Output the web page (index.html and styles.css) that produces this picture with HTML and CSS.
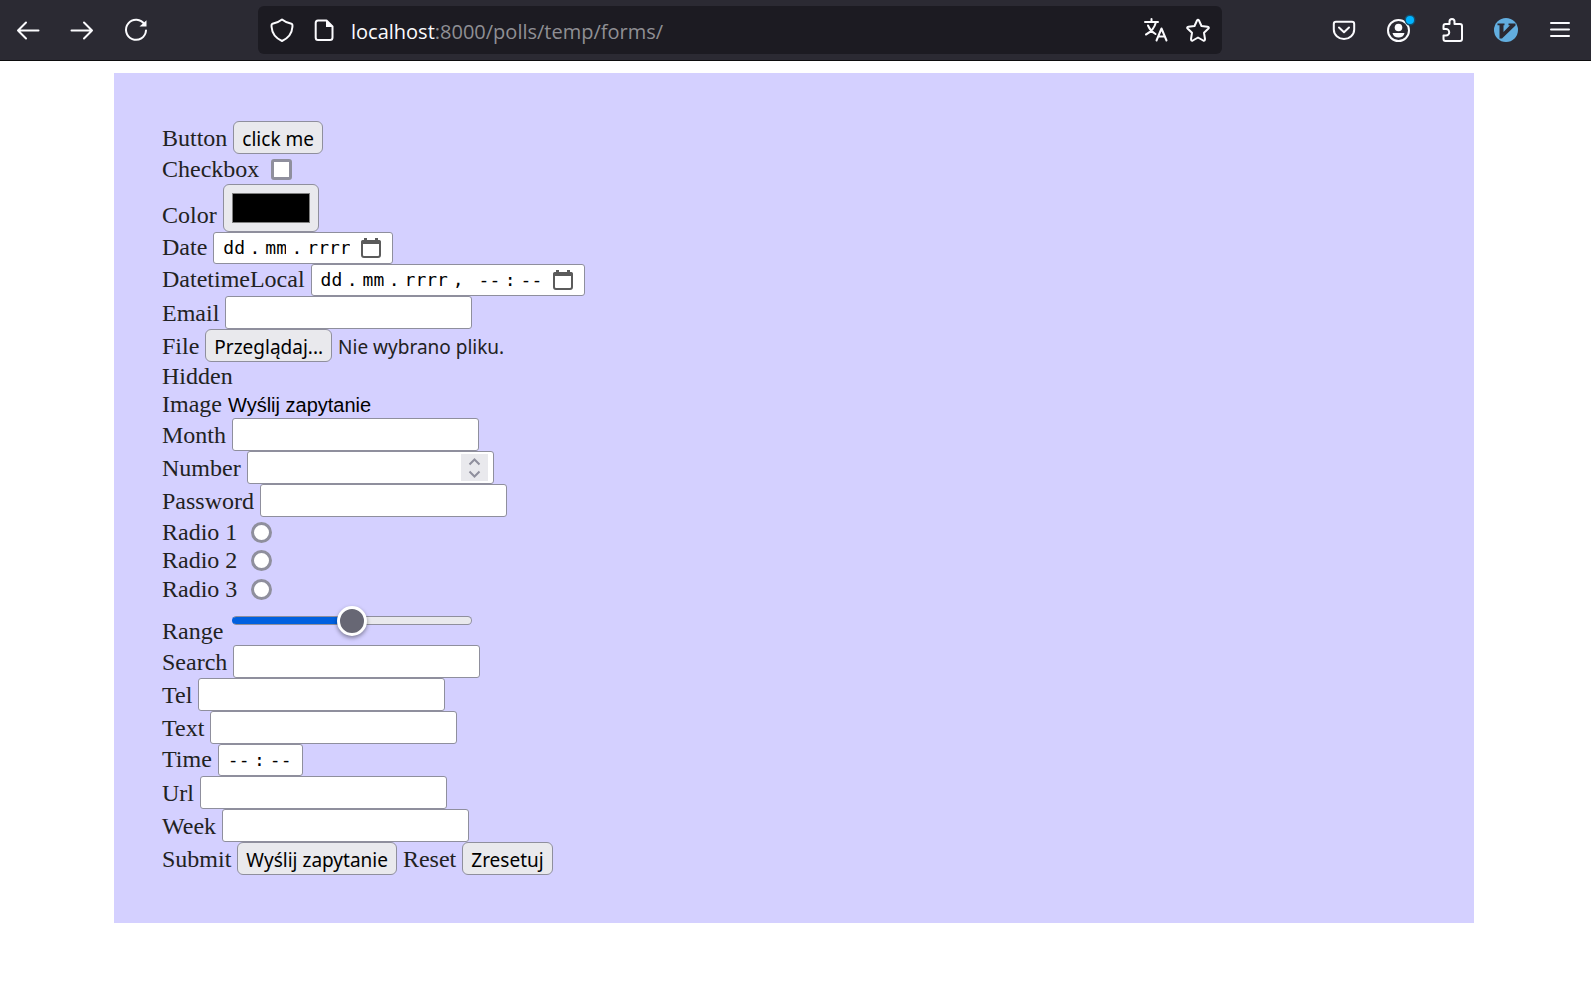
FILE: index.html
```html
<!DOCTYPE html>
<html lang="pl">
<head>
<meta charset="utf-8">
<title>Forms</title>
<link rel="stylesheet" href="styles.css">
</head>
<body>
<header class="toolbar">
  <nav class="tools">
    <button class="icon-btn" type="button"><svg class="icon" viewBox="0 0 24 24"><path d="M2 12.500H22.500M10 4.500L2 12.500L10 20.500"/></svg></button>
    <button class="icon-btn" type="button"><svg class="icon" viewBox="0 0 24 24"><path d="M1.500 12.500H22M14 4.500L22 12.500L14 20.500"/></svg></button>
    <button class="icon-btn" type="button"><svg class="icon" viewBox="0 0 24 24"><path d="M20.500 6.500A10 10 0 1 0 22 12.500"/><path class="solid" d="M22.500 2.200V8.500H15.500Z"/></svg></button>
  </nav>
  <div class="urlbar">
    <button class="icon-btn" type="button"><svg class="icon" viewBox="0 0 24 24"><path d="M12 1.500C14.500 3.600 18 5 21.500 5.800C22.800 6.100 22.500 7.500 22.400 9C22 15 18.500 20 12 23C5.500 20 2 15 1.600 9C1.500 7.500 1.200 6.100 2.500 5.800C6 5 9.500 3.600 12 1.500Z"/></svg></button>
    <button class="icon-btn" type="button"><svg class="icon" viewBox="0 0 24 24"><path d="M6 2.500H14.500L20.500 8.500V19.500Q20.500 22 18 22H6Q3.700 22 3.700 19.500V5Q3.700 2.500 6 2.500Z"/><path class="solid" d="M14 2V9H21Z"/></svg></button>
    <div class="url"><span class="host">localhost</span>:8000/polls/temp/forms/</div>
    <button class="icon-btn" type="button"><svg class="icon" viewBox="0 0 24 24"><path d="M1 4H14M7.500 1V4M12 4C10.500 10 7 14 2 16.500M4 7.500C5.500 11 8 14 11.500 16M12.500 22.500L17.500 10.500L22.500 22.500M14.500 18.500H20.500"/></svg></button>
    <button class="icon-btn" type="button"><svg class="icon" viewBox="0 0 24 24"><path d="M11 2.500Q12 0.800 13 2.500L15.500 8L21.500 8.800Q23.800 9.200 22.200 10.800L18 14.800L19 21Q19 23.200 17.200 22.500L12 19.500L6.800 22.500Q5 23.200 5 21L6 14.800L1.800 10.800Q0.200 9.200 2.500 8.800L8.500 8Z"/></svg></button>
  </div>
  <nav class="tools">
    <button class="icon-btn" type="button"><svg class="icon" viewBox="0 0 24 24"><path d="M4 3.700H20Q22.200 3.700 22.200 6V11.500A10.200 9.500 0 0 1 1.800 11.500V6Q1.800 3.700 4 3.700ZM7 9.500L12 14.200L17 9.500"/></svg></button>
    <button class="icon-btn" type="button"><svg class="icon" viewBox="0 0 24 24"><circle cx="12.500" cy="12.500" r="10.500"/><circle class="solid" cx="12.500" cy="9.500" r="3.800"/><path class="solid" d="M6.500 15H18.500C18 18 15.500 19.500 12.500 19.500S7 18 6.500 15Z"/><circle class="halo" cx="24" cy="2" r="5.500"/><circle class="dot" cx="24" cy="2" r="4"/></svg></button>
    <button class="icon-btn" type="button"><svg class="icon" viewBox="0 0 24 24"><path d="M3.500 11V8Q3.500 6 5.500 6H9.500V3.500A2.500 2.500 0 0 1 14.500 3.500V6H20Q22 6 22 8V21Q22 23 20 23H5.500Q3.500 23 3.500 21V17.500H6A3.200 3.200 0 0 0 6 11Z"/></svg></button>
    <button class="icon-btn" type="button"><svg class="icon" viewBox="0 0 24 24"><circle class="disc" cx="12" cy="12" r="12"/><path class="vee" d="M3.500 5.500H10.500V7.300H9.500V14L16 7.300H14.500V5.500H21.500V7.500L8 20.500H5.500V7.300H3.500Z"/></svg></button>
    <button class="icon-btn" type="button"><svg class="icon" viewBox="0 0 24 24"><path d="M3 5H21M3 11.500H21M3 18H21"/></svg></button>
  </nav>
</header>

<main>
<form class="panel">
  <div class="row tall"><label for="button">Button</label><button class="btn" id="button" type="button">click me</button></div>
  <div class="row check-row"><label for="checkbox">Checkbox</label><input class="check" id="checkbox" type="checkbox"></div>
  <div class="row color-row"><label for="color">Color</label><input class="color" id="color" type="color" value="#000000"></div>
  <div class="row mid"><label for="date">Date</label>
    <div class="field"><input class="seg" id="date" type="text" placeholder="dd"><span class="sep">.</span><input class="seg" type="text" placeholder="mm"><span class="sep">.</span><input class="seg year" type="text" placeholder="rrrr"><button class="cal" type="button"><svg class="cal-icon" viewBox="0 0 20 20"><rect x="1" y="3" width="18" height="16" rx="2"/><path class="cal-top" d="M0 6V4Q0 2 2 2H3V0H6V2H14V0H17V2H18Q20 2 20 4V6Z"/></svg></button></div></div>
  <div class="row mid"><label for="datetime">DatetimeLocal</label>
    <div class="field"><input class="seg" id="datetime" type="text" placeholder="dd"><span class="sep">.</span><input class="seg" type="text" placeholder="mm"><span class="sep">.</span><input class="seg year" type="text" placeholder="rrrr"><span class="sep comma">,</span><input class="seg" type="text" placeholder="--"><span class="sep">:</span><input class="seg" type="text" placeholder="--"><button class="cal" type="button"><svg class="cal-icon" viewBox="0 0 20 20"><rect x="1" y="3" width="18" height="16" rx="2"/><path class="cal-top" d="M0 6V4Q0 2 2 2H3V0H6V2H14V0H17V2H18Q20 2 20 4V6Z"/></svg></button></div></div>
  <div class="row tall"><label for="email">Email</label><input class="text" id="email" type="email"></div>
  <div class="row tall"><label for="file">File</label><button class="btn" id="file" type="button">Przeglądaj...</button><span class="file-name">Nie wybrano pliku.</span></div>
  <div class="row"><label>Hidden</label><input type="hidden"></div>
  <div class="row"><label for="image">Image</label><button class="image" id="image" type="button">Wyślij zapytanie</button></div>
  <div class="row tall"><label for="month">Month</label><input class="text" id="month" type="text"></div>
  <div class="row tall"><label for="number">Number</label><div class="number"><input class="text" id="number" type="number"><span class="spin"><svg class="spin-icon" viewBox="0 0 27 27"><path d="M8.500 10.500L13.500 5.500L18.500 10.500M8.500 17.500L13.500 22.500L18.500 17.500"/></svg></span></div></div>
  <div class="row tall"><label for="password">Password</label><input class="text" id="password" type="password"></div>
  <div class="row radio-row"><label for="radio1">Radio 1</label><input class="radio" id="radio1" name="radio" type="radio"></div>
  <div class="row"><label for="radio2">Radio 2</label><input class="radio" id="radio2" name="radio" type="radio"></div>
  <div class="row radio-row"><label for="radio3">Radio 3</label><input class="radio" id="radio3" name="radio" type="radio"></div>
  <div class="row range-row"><label for="range">Range</label><input class="range" id="range" type="range"></div>
  <div class="row tall"><label for="search">Search</label><input class="text" id="search" type="search"></div>
  <div class="row tall"><label for="tel">Tel</label><input class="text" id="tel" type="tel"></div>
  <div class="row tall"><label for="text">Text</label><input class="text" id="text" type="text"></div>
  <div class="row mid"><label for="time">Time</label>
    <div class="field"><input class="seg" id="time" type="text" placeholder="--"><span class="sep">:</span><input class="seg" type="text" placeholder="--"></div></div>
  <div class="row tall"><label for="url">Url</label><input class="text" id="url" type="url"></div>
  <div class="row tall"><label for="week">Week</label><input class="text" id="week" type="text"></div>
  <div class="row tall"><label for="submit">Submit</label><button class="btn" id="submit" type="submit">Wyślij zapytanie</button><label for="reset">Reset</label><button class="btn" id="reset" type="reset">Zresetuj</button></div>
</form>
</main>
</body>
</html>
```

FILE: styles.css
```css
* { box-sizing: border-box; }

body {
  margin: 0;
  background: #fff;
  color: #222;
  font: 24px/28px "Liberation Serif", "Times New Roman", serif;
}

button, input { margin: 0; padding: 0; font: inherit; color: #000; }

/* Browser toolbar */
.toolbar {
  display: flex;
  align-items: center;
  gap: 110px;
  height: 61px;
  padding: 0 19px 0 16px;
  background: #2b2a33;
  border-bottom: 1px solid #0c0c0d;
}
.tools { display: flex; gap: 30px; }
.urlbar {
  display: flex;
  flex: 1;
  align-items: center;
  gap: 18px;
  height: 48px;
  padding: 0 12px;
  border-radius: 6px;
  background: #1c1b22;
}
.url {
  flex: 1;
  margin-left: -3px;
  padding-top: 3px;
  color: #8f8f94;
  font: 20px/28px "Open Sans", "Noto Sans", sans-serif;
  white-space: nowrap;
}
.host { color: #fbfbfe; }
.icon-btn {
  display: flex;
  width: 24px;
  height: 24px;
  border: 0;
  background: none;
}
.icon {
  width: 24px;
  height: 24px;
  overflow: visible;
  fill: none;
  stroke: #fbfbfe;
  stroke-width: 2;
  stroke-linecap: round;
  stroke-linejoin: round;
}
.icon .solid { fill: #fbfbfe; stroke: none; }
.icon .halo { fill: #14506e; stroke: none; }
.icon .dot { fill: #00b3ff; stroke: none; }
.icon .disc { fill: #62aee0; stroke: none; }
.icon .vee { fill: #2b2a33; stroke: none; }

/* Form */
.panel {
  margin: 12px 117px 0 114px;
  padding: 48px;
  background: #d4d0ff;
}
.row { display: flex; align-items: flex-start; gap: 6px; height: 28px; }
.tall { height: 33px; }
.tall label { padding-top: 3px; }
.mid { height: 32px; }
.mid label { padding-top: 1px; }
.check-row { height: 30px; padding-top: 1px; }
.radio-row { height: 29px; padding-top: 1px; }
.radio-row + .range-row { height: 42px; }
.color-row { height: 48px; }
.color-row label { padding-top: 17px; }
.range-row label { padding-top: 14px; }

.btn {
  height: 33px;
  padding: 2px 8px 0;
  border: 1px solid #8f8f9d;
  border-radius: 6px;
  background: #e9e9ed;
  font: 19px/28px "Noto Sans", sans-serif;
}
.file-name { padding-top: 4px; font: 19px/28px "Noto Sans", sans-serif; }
.image {
  padding-top: 1px;
  border: 0;
  background: none;
  font: 20px/28px "Liberation Sans", Arial, sans-serif;
}
.text {
  appearance: none;
  width: 247px;
  height: 33px;
  padding: 0 6px;
  border: 1px solid #8f8f9d;
  border-radius: 3px;
  background: #fff;
}
.check, .radio {
  appearance: none;
  width: 21px;
  height: 21px;
  margin: 4px 0 0 6px;
  border: 3px solid #8f8f9d;
  border-radius: 3px;
  background: #fff;
}
.radio { margin-left: 8px; border-radius: 50%; }

.color {
  appearance: none;
  width: 96px;
  height: 48px;
  padding: 8px;
  border: 1px solid #8f8f9d;
  border-radius: 6px;
  background: #e9e9ed;
}
.color::-webkit-color-swatch-wrapper { padding: 0; }
.color::-webkit-color-swatch { border: 1px solid #808080; border-radius: 0; }

.field {
  display: flex;
  align-items: center;
  height: 32px;
  padding: 0 11px 0 9px;
  border: 1px solid #8f8f9d;
  border-radius: 3px;
  background: #fff;
  color: #000;
  font: 18px/28px "DejaVu Sans Mono", monospace;
}
.seg { width: 21px; height: 28px; border: 0; background: none; }
.seg::placeholder { color: #000; opacity: 1; }
.year { width: 43px; }
.sep { width: 21px; text-align: center; }
.comma { width: 31px; padding-right: 10px; }
.cal { display: flex; margin-left: 11px; border: 0; background: none; }
.cal-icon { width: 20px; height: 20px; fill: none; stroke: #5b5b5b; stroke-width: 2; }
.cal-top { fill: #5b5b5b; stroke: none; }

.number { position: relative; display: flex; }
.number .text { appearance: textfield; }
.number .text::-webkit-inner-spin-button { display: none; }
.spin { position: absolute; top: 3px; right: 6px; display: flex; background: #e9e9ed; }
.spin-icon { width: 27px; height: 27px; fill: none; stroke: #8f8f9d; stroke-width: 2; }

.range { appearance: none; width: 240px; height: 30px; margin: 2px 0 0 3px; background: none; }
.range::-webkit-slider-runnable-track {
  height: 9px;
  border: 1px solid #8f8f9d;
  border-radius: 5px;
  background: linear-gradient(to right, #0060df 50%, #e9e9ed 50%) border-box;
  border-left-color: #0060df;
}
.range::-webkit-slider-thumb {
  appearance: none;
  width: 30px;
  height: 30px;
  margin-top: -11px;
  border: 3px solid #fff;
  border-radius: 50%;
  background: #676774;
  box-shadow: 0 2px 4px rgba(0, 0, 0, 0.4);
}
```
